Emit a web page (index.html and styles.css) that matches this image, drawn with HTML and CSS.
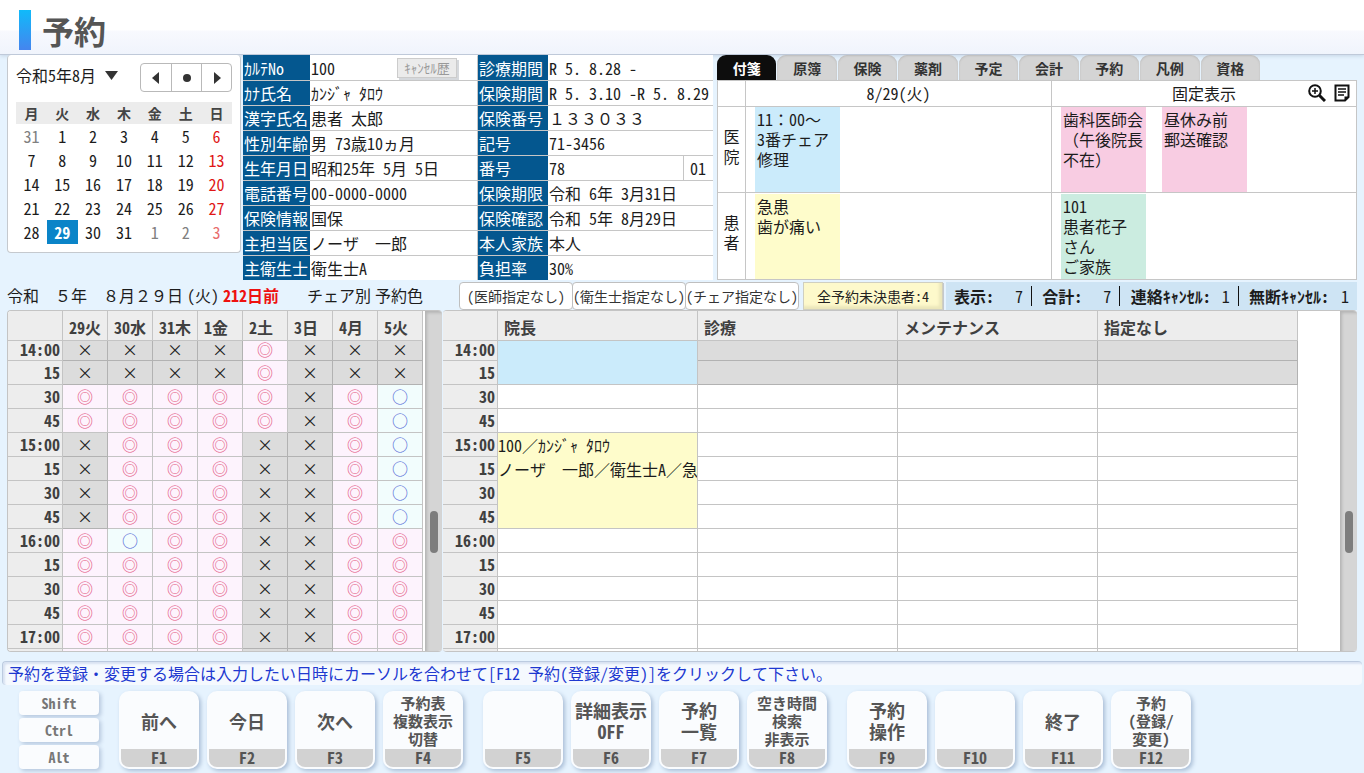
FILE: index.html
```html
<!DOCTYPE html>
<html lang="ja">
<head>
<meta charset="utf-8">
<title>予約</title>
<link rel="stylesheet" href="styles.css">
</head>
<body>
<header class="page-header"><h1 class="page-title">予約</h1></header>

<main class="page">
  <div class="top">
    <section class="calendar" aria-label="カレンダー">
      <div class="calendar-head">
        <label class="month">
          <select class="month-select" aria-label="年月"><option>令和5年8月</option></select>
          <svg class="month-arrow" viewBox="0 0 13 9" width="13" height="9"><path d="M0 0h13L6.500 9z"/></svg>
        </label>
        <div class="month-nav">
          <button type="button" aria-label="前月"><svg viewBox="0 0 12 12" width="12" height="12"><path d="M9 0v12L2 6z"/></svg></button>
          <button type="button" aria-label="今月"><svg viewBox="0 0 12 12" width="12" height="12"><circle cx="6" cy="6" r="4"/></svg></button>
          <button type="button" aria-label="翌月"><svg viewBox="0 0 12 12" width="12" height="12"><path d="M3 0v12l7-6z"/></svg></button>
        </div>
      </div>
      <table class="days">
        <thead><tr><th>月</th><th>火</th><th>水</th><th>木</th><th>金</th><th>土</th><th>日</th></tr></thead>
        <tbody id="days"></tbody>
      </table>
    </section>

    <section class="patient" aria-label="患者情報">
      <table class="info">
        <tr><th>ｶﾙﾃNo</th><td><div class="split"><span>100</span><button type="button" class="cancel-log" disabled>ｷｬﾝｾﾙ歴</button></div></td></tr>
        <tr><th>ｶﾅ氏名</th><td>ｶﾝｼﾞｬ ﾀﾛｳ</td></tr>
        <tr><th>漢字氏名</th><td>患者 太郎</td></tr>
        <tr><th>性別年齢</th><td>男 73歳10ヵ月</td></tr>
        <tr><th>生年月日</th><td>昭和25年 5月 5日</td></tr>
        <tr><th>電話番号</th><td>00-0000-0000</td></tr>
        <tr><th>保険情報</th><td>国保</td></tr>
        <tr><th>主担当医</th><td>ノーザ　一郎</td></tr>
        <tr><th>主衛生士</th><td>衛生士A</td></tr>
      </table>
      <table class="info info-right">
        <tr><th>診療期間</th><td>R 5. 8.28 -</td></tr>
        <tr><th>保険期間</th><td>R 5. 3.10 -R 5. 8.29</td></tr>
        <tr><th>保険番号</th><td>１３３０３３</td></tr>
        <tr><th>記号</th><td>71-3456</td></tr>
        <tr><th>番号</th><td><div class="split"><span>78</span><span class="branch">01</span></div></td></tr>
        <tr><th>保険期限</th><td>令和 6年 3月31日</td></tr>
        <tr><th>保険確認</th><td>令和 5年 8月29日</td></tr>
        <tr><th>本人家族</th><td>本人</td></tr>
        <tr><th>負担率</th><td>30%</td></tr>
      </table>
    </section>

    <section class="memo" aria-label="付箋">
      <div class="tabs" role="tablist">
        <button type="button" role="tab" aria-selected="true" class="tab tab-active">付箋</button>
        <button type="button" role="tab" class="tab">原簿</button>
        <button type="button" role="tab" class="tab">保険</button>
        <button type="button" role="tab" class="tab">薬剤</button>
        <button type="button" role="tab" class="tab">予定</button>
        <button type="button" role="tab" class="tab">会計</button>
        <button type="button" role="tab" class="tab">予約</button>
        <button type="button" role="tab" class="tab">凡例</button>
        <button type="button" role="tab" class="tab">資格</button>
      </div>
      <div class="board">
        <div class="cell"></div>
        <div class="cell board-title">8/29(火)</div>
        <div class="cell board-title board-fixed"><span>固定表示</span>
          <div class="board-tools">
            <button type="button" aria-label="拡大"><svg viewBox="0 0 18 18" width="18" height="18" fill="none" stroke="#111"><circle cx="7" cy="7" r="5.800" stroke-width="2"/><path d="M11.500 11.500l5.500 5.500" stroke-width="3"/><path d="M4 7h6M7 4v6" stroke-width="1.500"/></svg></button>
            <button type="button" aria-label="一覧"><svg viewBox="0 0 16 18" width="16" height="18" fill="none" stroke="#111"><path d="M1.500 1.500h13v11.500l-3.500 3.500H1.500z" stroke-width="2"/><path d="M4 5h8M4 8h8M4 11h6" stroke-width="1.500"/><path d="M15 12.500h-4.500V17z" fill="#111" stroke="none"/></svg></button>
          </div>
        </div>
        <div class="cell board-side">医<br>院</div>
        <div class="cell notes"><div class="note note-blue">11：00～<br>3番チェア<br>修理</div></div>
        <div class="cell notes"><div class="note note-pink">歯科医師会（午後院長不在）</div><div class="note note-pink">昼休み前<br>郵送確認</div></div>
        <div class="cell board-side">患<br>者</div>
        <div class="cell notes notes-patient"><div class="note note-yellow">急患<br>歯が痛い</div></div>
        <div class="cell notes notes-patient"><div class="note note-green">101<br>患者花子<br>さん<br>ご家族</div></div>
      </div>
    </section>
  </div>

  <div class="bar">
    <div class="bar-date"><span>令和　５年　８月２９日</span><span>(火)</span><strong class="ago">212日前</strong><span class="bar-mode">チェア別</span><span>予約色</span></div>
    <div class="filters">
      <button type="button" class="filter">(医師指定なし)</button>
      <button type="button" class="filter">(衛生士指定なし)</button>
      <button type="button" class="filter">(チェア指定なし)</button>
    </div>
    <button type="button" class="pending">全予約未決患者:4</button>
    <dl class="counts">
      <div class="count"><dt>表示:</dt><dd>7</dd></div>
      <div class="count"><dt>合計:</dt><dd>7</dd></div>
      <div class="count"><dt>連絡ｷｬﾝｾﾙ:</dt><dd>1</dd></div>
      <div class="count"><dt>無断ｷｬﾝｾﾙ:</dt><dd>1</dd></div>
    </dl>
  </div>

  <div class="schedules">
    <section class="schedule schedule-week" aria-label="週間空き状況">
      <div class="schedule-view"><table class="slots" id="week"></table></div>
      <div class="track"><div class="thumb"></div></div>
    </section>
    <section class="schedule schedule-chair" aria-label="チェア別予約">
      <div class="schedule-view schedule-view-chair"><table class="slots" id="chairs"></table></div>
      <div class="track"><div class="thumb"></div></div>
    </section>
  </div>
</main>

<p class="message">予約を登録・変更する場合は入力したい日時にカーソルを合わせて[F12 予約(登録/変更)]をクリックして下さい。</p>

<footer class="keys">
  <div class="mods">
    <button type="button" class="mod">Shift</button>
    <button type="button" class="mod">Ctrl</button>
    <button type="button" class="mod">Alt</button>
  </div>
  <div class="key-group">
    <button type="button" class="key"><span class="key-text">前へ</span><span class="key-name">F1</span></button>
    <button type="button" class="key"><span class="key-text">今日</span><span class="key-name">F2</span></button>
    <button type="button" class="key"><span class="key-text">次へ</span><span class="key-name">F3</span></button>
    <button type="button" class="key"><span class="key-text key-small">予約表<br>複数表示<br>切替</span><span class="key-name">F4</span></button>
  </div>
  <div class="key-group">
    <button type="button" class="key"><span class="key-text"></span><span class="key-name">F5</span></button>
    <button type="button" class="key"><span class="key-text">詳細表示<br>OFF</span><span class="key-name">F6</span></button>
    <button type="button" class="key"><span class="key-text">予約<br>一覧</span><span class="key-name">F7</span></button>
    <button type="button" class="key"><span class="key-text key-small">空き時間<br>検索<br>非表示</span><span class="key-name">F8</span></button>
  </div>
  <div class="key-group">
    <button type="button" class="key"><span class="key-text">予約<br>操作</span><span class="key-name">F9</span></button>
    <button type="button" class="key"><span class="key-text"></span><span class="key-name">F10</span></button>
    <button type="button" class="key"><span class="key-text">終了</span><span class="key-name">F11</span></button>
    <button type="button" class="key"><span class="key-text key-small">予約<br>(登録/<br>変更)</span><span class="key-name">F12</span></button>
  </div>
</footer>
<script src="script.js"></script>
</body>
</html>
```
FILE: styles.css
```css
* { box-sizing: border-box; }

body, button, select {
  font-family: "Noto Sans Mono CJK JP", "Noto Sans CJK JP", sans-serif;
  font-size: 16px;
  color: #1c1c1c;
}

body {
  margin: 0;
  min-height: 100vh;
  background: #e6f3fe;
  line-height: 24px;
}

button { padding: 0; border: 0; background: none; }
table { border-collapse: separate; border-spacing: 0; }
th, td { padding: 0; }

/* header */
.page-header {
  display: flex;
  align-items: center;
  height: 55px;
  padding: 5px 19px 0;
  background: linear-gradient(#fff 30px, #f8f9fe 31px, #f0f4fc);
  border-bottom: 1px solid #bfc9d9;
  box-shadow: 0 1px 4px #c5d3e4;
}
.page-title {
  margin: 0;
  display: flex;
  align-items: center;
  gap: 11px;
  font-size: 32px;
  font-weight: bold;
  line-height: 40px;
  color: #555;
}
.page-title::before {
  content: "";
  width: 12px;
  height: 40px;
  background: linear-gradient(#10bafa, #4585ee);
}

.page { padding: 0 7px; }

.top {
  display: grid;
  grid-template-columns: 234px minmax(0, 472fr) minmax(0, 640fr);
  column-gap: 2px;
  align-items: start;
}

/* calendar */
.calendar {
  padding: 8px;
  background: #fff;
  border: 1px solid #c5c9ce;
  border-top: 0;
  border-radius: 4px;
}
.calendar-head { display: flex; align-items: flex-start; justify-content: space-between; }
.month { display: flex; align-items: center; gap: 8px; }
.month-select {
  appearance: none;
  padding: 0;
  border: 0;
  background: none;
  line-height: 24px;
}
.month-arrow, .month-nav svg { fill: #333; }
.month-nav { display: flex; border: 1px solid #b9b9b9; border-radius: 4px; }
.month-nav button { display: grid; place-items: center; width: 30px; height: 27px; }
.month-nav button + button { border-left: 1px solid #b9b9b9; }
.days { width: 100%; margin-top: 10px; table-layout: fixed; text-align: center; }
.days th { height: 22px; background: #ececec; font-size: 14px; line-height: 22px; color: #444; }
.days td { height: 24px; line-height: 24px; }
.days button { display: block; width: 100%; line-height: 23px; height: 24px; }
.days .day-sun { color: #e01616; }
.days .day-off { color: #808080; }
.days .day-sun.day-off { color: #e86c6c; }
.days .day-on { background: #0a84c8; color: #fff; font-weight: bold; }

/* patient */
.patient {
  display: grid;
  grid-template-columns: 1fr 1fr;
  margin-right: 2px;
  white-space: nowrap;
  overflow: hidden;
  background: #fff;
}
.info { width: 100%; table-layout: fixed; }
.info th, .info td { height: 25px; line-height: 24px; border-top: 1px solid #c6c6c6; overflow: hidden; }
.info tr:first-child > * { border-top-color: transparent; line-height: 23px; }
.info th {
  width: 67px;
  padding-left: 1px;
  background: #04578f;
  color: #fff;
  font-weight: 500;
  text-align: left;
}
.info tr:first-child th { border-top-color: #04578f; }
.info td { padding-left: 1px; border-right: 1px solid #c6c6c6; }
.info-right th { width: 70px; }
.info-right td { border-right: 0; }
.split { display: flex; justify-content: space-between; align-items: center; height: 24px; }
.branch { width: 30px; padding-left: 6px; border-left: 1px solid #c6c6c6; }
.cancel-log {
  width: 60px;
  height: 20px;
  margin-right: 20px;
  background: #ebebeb;
  border: 1px solid #ccc;
  box-shadow: 2px 2px 0 #d5d8dc;
  font-size: 13px;
  line-height: 18px;
  color: #999;
}

/* memo */
.tabs { display: flex; width: 85%; }
.tab {
  flex: 1;
  height: 25px;
  margin-right: 1px;
  border-radius: 9px 9px 0 0;
  background: #d4d4d4;
  box-shadow: inset 0 1px 2px #bbb;
  font-size: 14px;
  font-weight: bold;
  color: #333;
}
.tab-active { background: #0d0d0d; box-shadow: none; color: #fff; }
.board {
  display: grid;
  grid-template-columns: 28px 306fr 305fr;
  grid-template-rows: 26px 86px 87px;
  background: #fff;
  border-right: 1px solid #c6c6c6;
  border-bottom: 1px solid #c6c6c6;
}
.cell { border-top: 1px solid #c6c6c6; border-left: 1px solid #c6c6c6; }
.board-title { text-align: center; }
.board-fixed { position: relative; }
.board-tools { position: absolute; right: 6px; top: 3px; display: flex; gap: 8px; }
.board-tools button { display: grid; }
.board-side { display: grid; place-items: center; padding-bottom: 8px; line-height: 20px; }
.notes { display: flex; gap: 16px; padding-left: 9px; }
.notes-patient { padding-top: 1px; }
.note { width: 85px; padding: 2px; line-height: 20px; }
.note-blue { background: #cbebfb; }
.note-pink { background: #f8cce2; }
.note-yellow { background: #fefccb; }
.note-green { background: #cbece0; }

/* status bar */
.bar { display: flex; align-items: center; height: 30px; padding-top: 2px; white-space: nowrap; }
.bar-date { display: flex; gap: 4px; width: 452px; padding-bottom: 3px; }
.ago { color: #ee1111; }
.bar-mode { margin-left: 24px; }
.filters { display: flex; }
.filter {
  width: 114px;
  height: 28px;
  border: 1px solid #bfbfbf;
  border-radius: 4px;
  background: #fff;
  font-size: 14px;
  color: #333;
}
.filter:not(:last-child) { margin-right: -1px; }
.pending {
  width: 140px;
  height: 28px;
  margin: 0 3px 0 4px;
  background: #fdf9cb;
  border: 1px solid #cfcfc0;
  box-shadow: inset -3px -3px 3px #ebe6ba, 1px 1px 0 #c4c8cc;
  font-size: 14px;
  color: #222;
}
.counts {
  flex: 1;
  display: flex;
  align-items: center;
  justify-content: space-between;
  height: 28px;
  margin: 0;
  padding: 0 8px;
  background: #cee4f4;
}
.count { display: flex; align-items: center; justify-content: space-between; height: 20px; flex: 0 1 78px; padding-right: 8px; }
.count:not(:last-child) { border-right: 1px solid #111; }
.count:nth-child(n + 3) { flex-basis: 108px; }
.count:last-child { flex-basis: 100px; padding-right: 0; }
.count dt { font-weight: bold; }
.count dd { margin: 0; }

/* schedules */
.schedules { display: flex; gap: 1px; height: 342px; }
.schedule {
  display: flex;
  min-width: 0;
  overflow: hidden;
  border: 1px solid #c4c4c4;
  border-right: 0;
  border-radius: 4px;
  background: #fff;
}
.schedule-week { width: 435px; flex: none; }
.schedule-chair { flex: 1; border-left: 0; }
.schedule-view { flex: 1; min-width: 0; padding-right: 2px; overflow: hidden; }
.schedule-view-chair { padding-right: 42px; }
.track { display: flex; justify-content: center; width: 17px; background: #d5d5d5; box-shadow: inset 2px 2px 3px #b5b5b5; }
.thumb { width: 8px; height: 42px; margin-top: 200px; border-radius: 4px; background: #7d7d7d; }
.slots { width: 100%; table-layout: fixed; white-space: nowrap; }
.slots th, .slots td {
  height: 24px;
  line-height: 23px;
  border-right: 1px solid #c4c4c4;
  border-bottom: 1px solid #c4c4c4;
}
.slots th { background: #ededed; color: #404040; }
.slots thead th { height: 30px; padding: 4px 0 0 6px; line-height: 25px; text-align: left; }
.slots thead th:first-child { width: 55px; }
.slots tbody th { padding-right: 2px; text-align: right; }
.slots .row-cut > * { height: 20px; line-height: 17px; padding-bottom: 2px; }
#week td { text-align: center; }
.slots .slot-no { background: #dcdcdc; border-color: #b2b2b2; }
.slots .slot-many { background: #fdf3fd; color: #e34f7c; }
.slots .slot-few { background: #f2fdfd; color: #4a60d4; }
.slots .slot-blue { background: #cbebfb; }
.slots .slot-booked { background: #fefccb; vertical-align: top; line-height: 24px; overflow: hidden; }

/* message */
.message {
  margin: 9px 2px 6px;
  padding: 0 5px;
  border-top: 1px solid #bccbe0;
  border-left: 1px solid #bccbe0;
  border-radius: 4px;
  background: #f5f9fe;
  box-shadow: inset 2px 2px 2px #d8e2f2;
  line-height: 23px;
  color: #2038d0;
}

/* function keys */
.keys { display: flex; gap: 20px; padding: 0 19px 4px; }
.mods { display: grid; gap: 3px; width: 80px; }
.mod {
  height: 24px;
  border-radius: 4px;
  background: #fafcfe;
  box-shadow: 2px 2px 4px #b4c6dc;
  font-size: 14px;
  font-weight: bold;
  color: #777;
}
.key-group { display: flex; gap: 8px; }
.key {
  display: flex;
  flex-direction: column;
  width: 80px;
  height: 78px;
  overflow: hidden;
  border: 2px solid #fafcfe;
  border-radius: 10px;
  background: #fafcfe;
  box-shadow: 2px 2px 4px #a9bdd6;
  color: #555;
  font-weight: bold;
}
.key-text { flex: 1; display: grid; place-content: center; width: 100%; font-size: 18px; line-height: 21px; }
.key-small { font-size: 15px; line-height: 18px; }
.key-name { width: 100%; height: 18px; background: #d2d2d2; line-height: 17px; }
```
FILE: script.js
```js
const row = (cells, cls = '') => `<tr class="${cls}">${cells.join('')}</tr>`;

// Calendar: starts on Monday 7/31
let days = '';
for (let w = 0; w < 5; w++) {
  const cells = [];
  for (let d = 0; d < 7; d++) {
    const n = w * 7 + d;
    const off = n < 1 || n > 31;
    const label = n < 1 ? 31 : n > 31 ? n - 31 : n;
    const cls = [d === 6 ? 'day-sun' : '', off ? 'day-off' : '', n === 29 ? 'day-on' : ''].join(' ');
    cells.push(`<td><button type="button" class="${cls}">${label}</button></td>`);
  }
  days += row(cells);
}
document.getElementById('days').innerHTML = days;

const times = ['14:00', '15', '30', '45', '15:00', '15', '30', '45', '16:00', '15', '30', '45', '17:00', ''];
const rowClass = i => i === 0 ? 'row-cut' : '';

// Weekly availability: x = closed, m = many, f = few
const marks = { x: ['slot-no', '×'], m: ['slot-many', '◎'], f: ['slot-few', '○'] };
const week = [
  ['29火', 'xxmmxxxxmmmmmm'],
  ['30水', 'xxmmmmmmfmmmmm'],
  ['31木', 'xxmmmmmmmmmmmm'],
  ['1金', 'xxmmmmmmmmmmmm'],
  ['2土', 'mmmmxxxxxxxxxx'],
  ['3日', 'xxxxxxxxxxxxxx'],
  ['4月', 'xxmmmmmmmmmmmm'],
  ['5火', 'xxffffffmmmmmm']
];
document.getElementById('week').innerHTML =
  `<thead>${row(['<th></th>', ...week.map(c => `<th>${c[0]}</th>`)])}</thead><tbody>` +
  times.map((t, i) => row([`<th>${t}</th>`, ...week.map(c => {
    const [cls, mark] = marks[c[1][i]];
    return `<td class="${cls}">${t ? mark : ''}</td>`;
  })], rowClass(i))).join('') + '</tbody>';

// Chair schedule
const chairs = ['院長', '診療', 'メンテナンス', '指定なし'];
const booked = {
  0: '<td class="slot-blue" rowspan="2"></td>',
  4: '<td class="slot-booked" rowspan="4">100／ｶﾝｼﾞｬ ﾀﾛｳ<br>ノーザ　一郎／衛生士A／急患</td>'
};
const covered = [1, 5, 6, 7];
document.getElementById('chairs').innerHTML =
  `<thead>${row(['<th></th>', ...chairs.map(c => `<th>${c}</th>`)])}</thead><tbody>` +
  times.map((t, i) => row([`<th>${t}</th>`, ...chairs.map((c, n) => {
    if (n === 0 && booked[i]) return booked[i];
    if (n === 0 && covered.includes(i)) return '';
    return `<td class="${i < 2 ? 'slot-no' : ''}"></td>`;
  })], rowClass(i))).join('') + '</tbody>';
```
